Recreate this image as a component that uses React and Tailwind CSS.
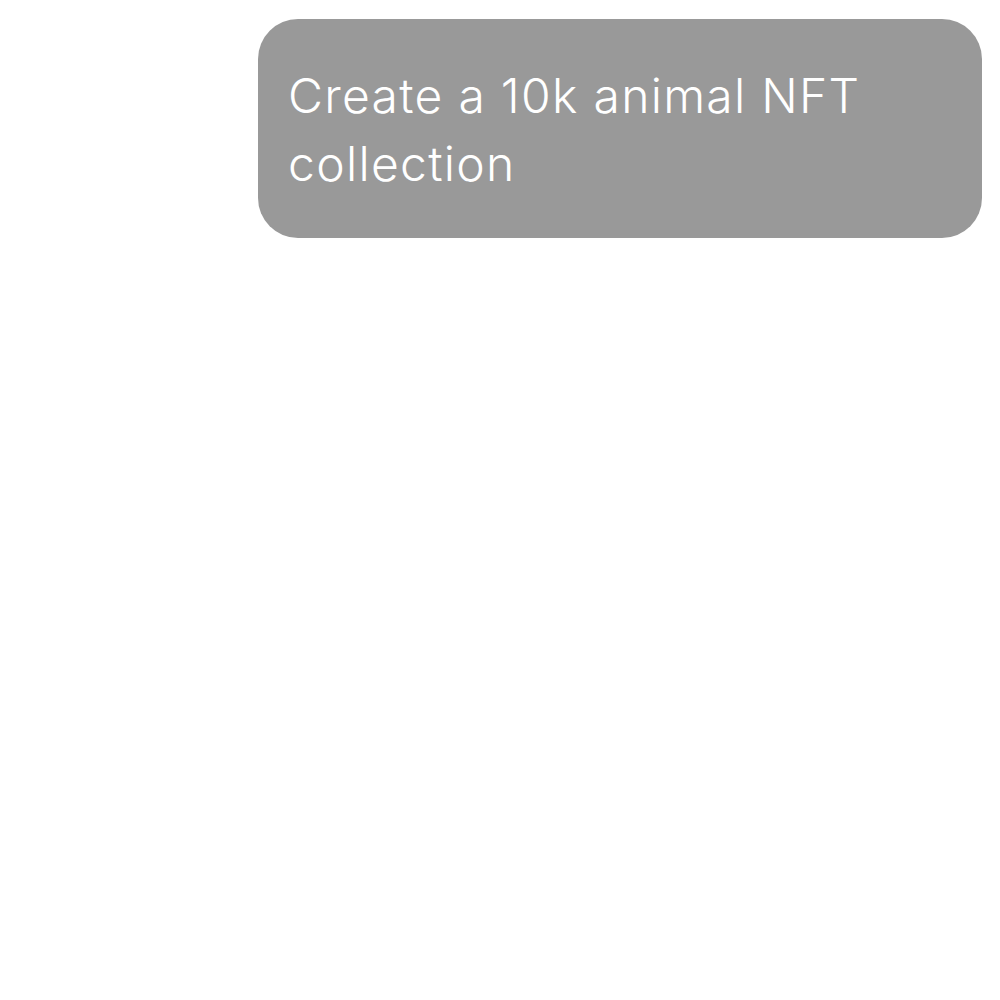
import React from 'react';

export default function App() {
  return (
    <div className="min-h-screen w-full bg-white" style={{ fontFamily: 'Inter, "Noto Sans", sans-serif' }}>
      <div className="pt-[19px] pl-[258px]">
        <div className="w-[724px] h-[219px] rounded-[40px] bg-[#999999] px-[30px] pt-[43px]">
          <p className="text-[48px] leading-[68px] font-light text-white tracking-[1.3px]">
            Create a 10k animal NFT collection
          </p>
        </div>
      </div>
    </div>
  );
}
